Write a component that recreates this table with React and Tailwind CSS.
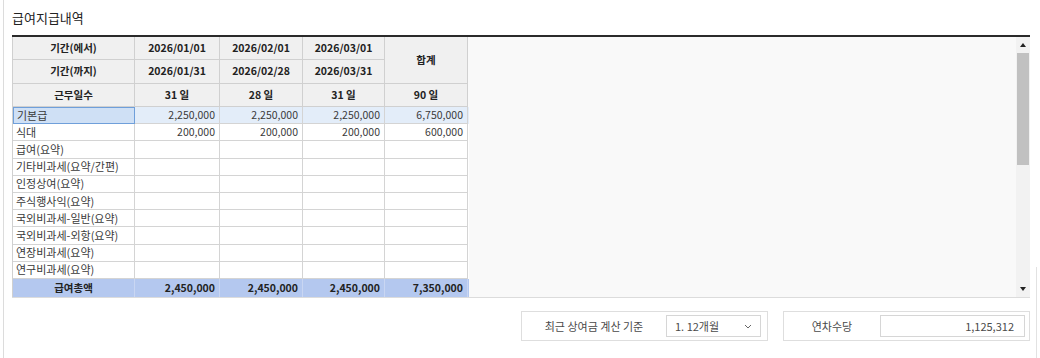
const FONT = { fontFamily: '"Noto Sans CJK KR", "Noto Sans", sans-serif' };

const COLS = ['w-[85px]', 'w-[83px]', 'w-[82px]', 'w-[83px]'];

const ROWS = [
  { label: '기본급', values: ['2,250,000', '2,250,000', '2,250,000', '6,750,000'], selected: true },
  { label: '식대', values: ['200,000', '200,000', '200,000', '600,000'] },
  { label: '급여(요약)' },
  { label: '기타비과세(요약/간편)' },
  { label: '인정상여(요약)' },
  { label: '주식행사익(요약)' },
  { label: '국외비과세-일반(요약)' },
  { label: '국외비과세-외항(요약)' },
  { label: '연장비과세(요약)' },
  { label: '연구비과세(요약)' },
];

function HeadCell({ className = '', children }) {
  return (
    <div className={`flex items-center justify-center border-r border-b border-[#d0d0d0] bg-[#f0f0f0] font-bold text-[#222] ${className}`}>
      {children}
    </div>
  );
}

function Header() {
  return (
    <div className="flex">
      <div className="flex flex-col">
        <div className="flex h-[23px]">
          <HeadCell className="w-[122px]">기간(에서)</HeadCell>
          <HeadCell className={COLS[0]}>2026/01/01</HeadCell>
          <HeadCell className={COLS[1]}>2026/02/01</HeadCell>
          <HeadCell className={COLS[2]}>2026/03/01</HeadCell>
        </div>
        <div className="flex h-[24px]">
          <HeadCell className="w-[122px]">기간(까지)</HeadCell>
          <HeadCell className={COLS[0]}>2026/01/31</HeadCell>
          <HeadCell className={COLS[1]}>2026/02/28</HeadCell>
          <HeadCell className={COLS[2]}>2026/03/31</HeadCell>
        </div>
      </div>
      <HeadCell className={`${COLS[3]} h-[47px]`}>합계</HeadCell>
    </div>
  );
}

function DataRow({ row }) {
  const vals = row.values || ['', '', '', ''];
  return (
    <div className={`flex h-[17.3px] ${row.selected ? 'bg-[#e3edf9]' : 'bg-white'}`}>
      <div
        className={`w-[122px] flex items-center pl-[3px] text-[11px] text-[#3a3a3a] ${
          row.selected
            ? 'bg-[#cfe0f5] border border-[#6f9fda]'
            : 'border-r border-b border-[#d4d4d4]'
        }`}
      >
        {row.label}
      </div>
      {vals.map((v, i) => (
        <div
          key={i}
          className={`${COLS[i]} flex items-center justify-end pr-[4px] border-r border-b border-[#d4d4d4] text-[#3a3a3a]`}
        >
          {v}
        </div>
      ))}
    </div>
  );
}

function Scrollbar() {
  return (
    <div className="w-[14px] flex flex-col bg-[#f2f2f2]">
      <div className="h-[16px] flex items-center justify-center">
        <div className="w-0 h-0 border-l-[3px] border-r-[3px] border-b-[4px] border-l-transparent border-r-transparent border-b-[#222]" />
      </div>
      <div className="h-[112px] mx-[1px] bg-[#c1c1c1]" />
      <div className="flex-1" />
      <div className="h-[16px] flex items-center justify-center">
        <div className="w-0 h-0 border-l-[3px] border-r-[3px] border-t-[4px] border-l-transparent border-r-transparent border-t-[#222]" />
      </div>
    </div>
  );
}

export default function App() {
  return (
    <div className="w-[1040px] h-[358px] bg-white flex overflow-hidden" style={FONT}>
      <div className="w-[3px]" />
      <div className="border-l border-[#dcdcdc] h-full" />
      <div className="w-[1018px] ml-[8px] flex flex-col">
        <div className="h-[35px] flex items-center text-[13px] text-[#222]">급여지급내역</div>
        <div className="h-[2px] bg-[#2a2a2a]" />
        <div className="h-[261px] flex bg-[#f9f9f9] border-b border-[#dcdcdc] text-[10.5px] leading-none">
          <div className="w-[457px] flex flex-col border-l border-[#d0d0d0]">
            <Header />
            <div className="flex h-[23px]">
              <HeadCell className="w-[122px]">근무일수</HeadCell>
              <HeadCell className={COLS[0]}>31 일</HeadCell>
              <HeadCell className={COLS[1]}>28 일</HeadCell>
              <HeadCell className={COLS[2]}>31 일</HeadCell>
              <HeadCell className={COLS[3]}>90 일</HeadCell>
            </div>
            {ROWS.map((r) => (
              <DataRow key={r.label} row={r} />
            ))}
            <div className="flex h-[18px] bg-[#b4c8ef] font-bold text-[#222]">
              <div className="w-[122px] flex items-center justify-center border-r border-[#c9d6f2]">급여총액</div>
              {['2,450,000', '2,450,000', '2,450,000', '7,350,000'].map((v, i) => (
                <div key={i} className={`${COLS[i]} flex items-center justify-end pr-[4px] border-r border-[#c9d6f2]`}>
                  {v}
                </div>
              ))}
            </div>
          </div>
          <div className="flex-1" />
          <Scrollbar />
        </div>
        <div className="flex justify-end gap-[15px] mt-[13px] text-[11px] text-[#4a4a4a]">
          <div className="w-[247px] h-[30px] flex items-center border border-[#dedede] pr-[6px]">
            <div className="flex-1 text-center">최근 상여금 계산 기준</div>
            <div className="w-[95px] h-[22px] flex items-center justify-between border border-[#d6d6d6] pl-[8px] pr-[8px] bg-white">
              <span>1. 12개월</span>
              <svg width="8" height="5" viewBox="0 0 8 5" fill="none" stroke="#666" strokeWidth="1">
                <path d="M1 1l3 3 3-3" />
              </svg>
            </div>
          </div>
          <div className="w-[247px] h-[30px] flex items-center border border-[#dedede] pr-[4px]">
            <div className="w-[96px] text-center">연차수당</div>
            <div className="flex-1 h-[22px] flex items-center justify-end border border-[#d6d6d6] pr-[10px] bg-white">
              1,125,312
            </div>
          </div>
        </div>
      </div>
      <div className="ml-[6px] mt-[267px] border-l border-[#e2e2e2]" />
    </div>
  );
}
